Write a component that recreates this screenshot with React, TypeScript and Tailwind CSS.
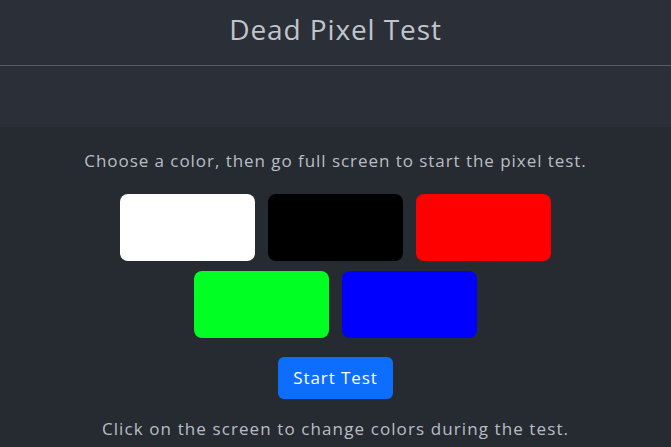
const COLORS = ["#ffffff", "#000000", "#ff0000", "#00ff22", "#0000ff"];

export default function App() {
  return (
    <div className="min-h-screen bg-[#262a31] text-[#b9bec6]" style={{ fontFamily: '"Open Sans", sans-serif' }}>
      <header className="h-[66px] bg-[#2b2f37] border-b border-[#575b62] flex items-center justify-center">
        <h1 className="text-[28px] tracking-[0.9px] text-[#c0c5cc] -mt-[8px]">Dead Pixel Test</h1>
      </header>
      <div className="h-[61px] bg-[#2b2f37]" />
      <main className="flex flex-col items-center pt-[22px]">
        <p className="text-[17px] leading-[24px] tracking-[0.95px]">Choose a color, then go full screen to start the pixel test.</p>
        <div className="mt-[21px] flex flex-wrap justify-center gap-x-[13px] gap-y-[10px] w-[431px]">
          {COLORS.map((c) => (
            <button key={c} className="w-[135px] h-[67px] rounded-[8px]" style={{ backgroundColor: c }} />
          ))}
        </div>
        <button className="mt-[19px] w-[115px] h-[42px] rounded-[6px] bg-[#0d6efd] text-white text-[17px] tracking-[0.9px]">Start Test</button>
        <p className="mt-[18px] text-[17px] leading-[24px] tracking-[1.1px]">Click on the screen to change colors during the test.</p>
      </main>
    </div>
  );
}
